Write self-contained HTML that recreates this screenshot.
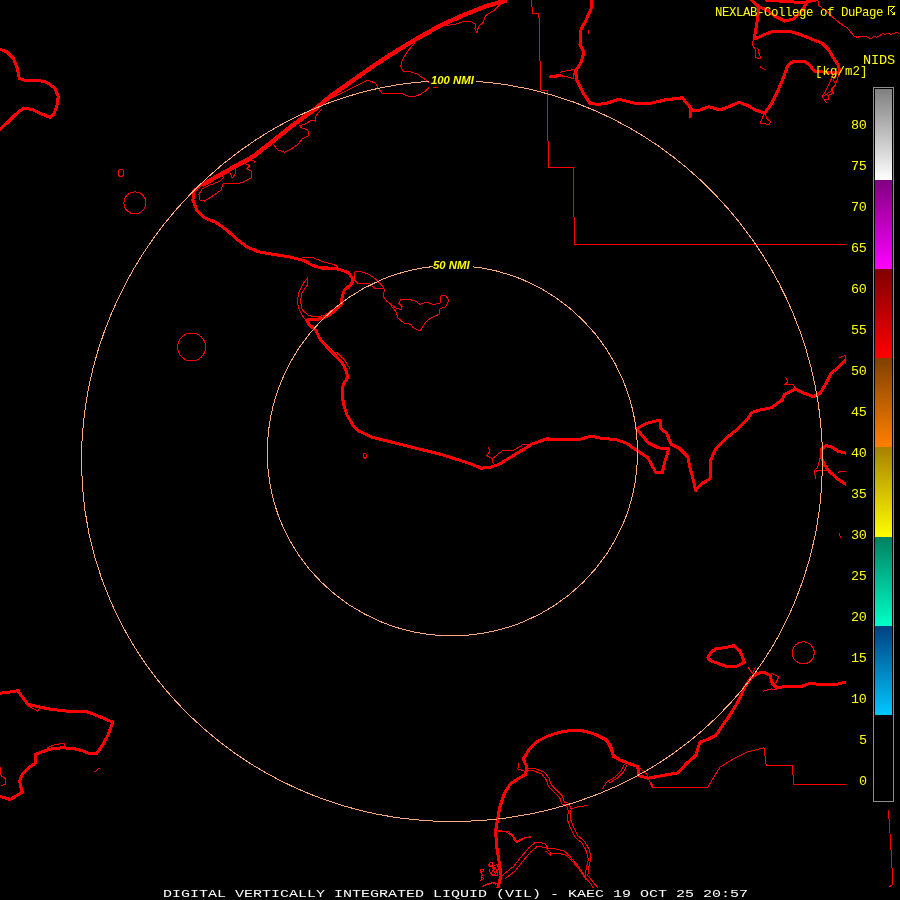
<!DOCTYPE html>
<html><head><meta charset="utf-8"><title>DIGITAL VERTICALLY INTEGRATED LIQUID (VIL) - KAEC</title>
<style>
html,body{margin:0;padding:0;background:#000;}
body{width:900px;height:900px;position:relative;overflow:hidden;font-family:"Liberation Mono",monospace;}
.t{position:absolute;white-space:pre;line-height:1;will-change:transform;}
.y{color:#ffff00;}
.n{position:absolute;right:33.5px;color:#ffff00;font-size:13.4px;line-height:1;letter-spacing:-0.3px;white-space:pre;height:9px;will-change:transform;}
.n{margin-top:-0.6px}
.r{position:absolute;color:#ffff00;font:italic bold 11.35px "Liberation Sans",sans-serif;line-height:1;white-space:pre;will-change:transform;}
</style></head><body>
<svg width="900" height="900" viewBox="0 0 900 900" style="position:absolute;left:0;top:0" shape-rendering="crispEdges">
<g fill="none" stroke="#ff0000" stroke-width="1" stroke-linejoin="round" stroke-linecap="butt">
<path d="M531.8,0.0 L532.2,13.3 L538.9,13.3 L540.7,90.0 L547.3,90.7 L548.4,167.1 L573.3,167.1 L574.4,244.4"/>
<path d="M574.4,244.4 L846,244.4"/>
<path d="M640.0,767.8 L646.7,774.4 L650.0,782.2 L652.2,787.1 L707.8,787.1 L720.0,767.1 L733.3,758.9 L746.7,752.2 L764.0,747.8 L766.2,765.6 L792.2,765.6 L793.8,784.4 L846.7,784.4"/>
<path d="M888.4,810.0 L890.0,833.3 L891.6,860.0 L892.9,884.4 L888.9,887.3"/>
<path d="M817.8,0.0 L818.9,5.6 L826.7,11.1 L833.3,17.8 L840.0,23.3 L840.0,23.0 L844.0,26.0 L846.7,27.3 L850.0,31.3 L854.0,36.0 L857.3,37.3 L861.3,36.3 L865.3,36.3 L869.3,38.3 L872.0,38.0 L874.0,36.3 L876.7,37.3 L880.0,35.3 L882.7,33.7 L885.3,34.3 L888.0,33.3 L891.3,34.3 L894.0,33.3 L896.7,32.3 L899.0,33.7"/>
<path d="M213.3,177.8 L222.2,174.4 L223.3,177.8 L220.0,181.1 L208.9,185.6 L202.2,188.9 L198.9,194.4 L200.0,200.0 L204.4,201.1 L213.3,195.6 L221.1,190.0 L223.3,183.3 L233.3,184.0 L242.2,182.7 L251.1,177.8 L251.6,171.1 L246.7,168.9 L250.0,165.6 L244.4,163.3 L246.7,160.4 L255.6,161.1 L254.4,163.3"/>
<path d="M230.0,173.3 L232.2,177.8 L235.6,173.3 L235.6,167.8"/>
<path d="M273.3,144.4 L277.8,150.0 L284.4,152.2 L291.1,148.9 L297.8,144.4 L302.2,138.9 L308.9,135.6 L307.8,130.0 L301.1,127.8 L300.0,125.6 L306.7,123.3 L311.1,120.0 L315.6,121.1 L315.6,116.7 L317.8,113.3 L322.2,108.9"/>
<path d="M414.4,43.3 L407.8,51.1 L402.2,60.0 L400.7,66.7 L403.3,71.6 L410.0,71.6 L417.8,74.4 L424.4,78.9 L428.9,82.2"/>
<path d="M428.9,87.8 L425.6,91.1 L420.0,94.4 L415.6,96.2 L407.8,96.0 L401.1,93.3 L392.2,93.8 L382.2,93.3 L377.8,87.8 L375.6,83.3 L367.8,80.0 L358.9,84.4 L343.3,92.2 L330.0,98.9"/>
<path d="M445.6,25.6 L454.4,24.4 L463.3,21.6 L471.1,21.6 L475.6,24.4 L474.9,28.9 L477.1,32.9 L478.4,26.7 L483.3,22.2 L485.6,15.6 L494.4,10.0 L501.1,3.3 L505.6,0.0"/>
<path d="M432.7,87.3 L437.8,87.3"/>
<path d="M560.0,72.2 L574.4,69.3 L573.3,78.9 L566.7,76.7 L560.0,75.6"/>
<path d="M753.3,40.0 L752.2,44.4 L755.6,50.0 L755.6,57.8 L761.1,58.9 L758.9,53.3 L757.8,47.8"/>
<path d="M760.0,66.7 L765.6,70.0"/>
<path d="M833.3,73.3 L830.0,82.2 L825.6,91.1 L822.2,96.7 L826.7,103.3"/>
<path d="M838.9,74.4 L835.6,84.4 L831.1,91.1 L824.4,95.6"/>
<path d="M764.4,113.3 L760.0,123.3 L768.9,124.4 L771.1,121.8 L766.7,118.9 L765.6,114.4"/>
<path d="M838.9,357.8 L845.6,355.6 L845.6,364.4"/>
<path d="M785.6,376.7 L787.8,382.2 L784.4,384.4 L793.3,384.4 L795.6,388.9"/>
<path d="M820.0,457.8 L817.8,466.7 L814.4,471.1 L815.6,478.9"/>
<path d="M815.6,471.1 L826.7,470.0"/>
<path d="M837.8,472.2 L845.6,471.1"/>
<path d="M839.6,533.3 L840.4,537.8"/>
<path d="M302.2,257.8 L313.3,257.8 L324.4,262.2 L333.3,264.4 L337.8,266.7"/>
<path d="M308.9,263.3 L320.0,266.7 L327.8,266.7"/>
<path d="M305.6,320.0 L302.2,315.6 L298.9,308.9 L297.3,301.1 L298.9,292.2 L303.3,283.3 L307.8,277.8 L307.8,284.4 L302.2,292.2 L300.4,301.1 L302.2,310.0 L308.9,315.6 L315.6,316.7 L324.4,315.6 L333.3,308.9"/>
<path d="M354.4,280.0 L354.4,272.2 L358.9,271.1 L368.9,274.4 L375.6,278.9 L382.2,285.6 L384.4,290.0 L383.3,296.7 L386.7,301.1 L391.1,304.4 L395.6,307.8 L401.1,310.0 L402.2,306.7 L398.9,303.3 L401.1,299.3 L408.9,299.3 L415.6,301.1 L420.0,304.4 L426.7,302.2 L433.3,304.4 L440.0,303.3 L441.1,295.6 L445.6,295.6 L448.9,300.0 L445.6,306.7 L440.0,308.9 L438.9,314.4 L431.1,317.8 L425.6,322.2 L420.0,331.1 L413.3,327.8 L411.1,324.4 L404.4,323.3 L397.8,317.8 L395.6,311.1 L391.1,305.6"/>
<path d="M354.4,280.0 L357.8,283.3 L368.9,283.3 L375.6,288.9 L383.3,288.9"/>
<path d="M336.7,352.2 L344.4,360.0 L350.0,368.9"/>
<path d="M487.8,446.7 L490.0,451.1 L486.7,455.6 L492.2,458.9 L503.3,450.0 L514.4,450.0 L523.3,444.4 L528.9,444.4"/>
<path d="M527.8,768.9 L535.6,768.9 L544.4,772.2 L548.9,777.8 L551.1,784.4 L557.8,791.1 L562.2,795.6 L564.4,802.2 L568.9,803.3 L571.1,808.9 L570.0,817.8 L573.3,826.7 L577.8,835.6 L584.4,841.1 L588.9,848.9 L591.1,857.8 L588.9,866.7 L587.8,875.6 L593.3,882.2 L597.8,887.8"/>
<path d="M525.1,770.7 L532.9,770.7 L541.8,774.0 L546.2,779.6 L548.4,786.2 L555.1,792.9 L559.6,797.3 L561.8,804.0 L566.2,805.1 L568.4,810.7 L567.3,819.6 L570.7,828.4 L575.1,837.3 L581.8,842.9 L586.2,850.7 L588.4,859.6 L586.2,868.4 L585.1,877.3 L590.7,884.0"/>
<path d="M571.1,808.9 L577.8,806.7 L587.8,805.6"/>
<path d="M503.3,874.4 L513.3,866.7 L522.2,855.6 L528.9,847.8 L535.6,842.2 L544.4,843.3 L548.9,848.9 L555.6,848.9 L564.4,851.1 L571.1,857.8 L577.8,865.6 L584.4,875.6 L591.1,884.4 L593.3,887.8"/>
<path d="M505.1,878.7 L515.1,870.9 L524.0,859.8 L530.7,852.0 L537.3,846.4 L546.2,847.6 L550.7,853.1 L557.3,853.1 L566.2,855.3 L572.9,862.0 L579.6,869.8 L586.2,879.8"/>
<path d="M545.6,851.1 L551.1,855.6"/>
<path d="M497.8,831.1 L507.8,831.1 L513.3,835.6 L516.7,841.1 L524.4,837.8 L531.1,836.7"/>
<path d="M624.4,764.4 L621.1,771.1 L615.6,776.7 L606.7,782.2 L602.2,788.9"/>
<path d="M626.7,765.6 L623.3,772.2 L617.8,777.8 L608.9,783.3"/>
<path d="M518.9,763.3 L517.8,768.9 L524.4,771.1"/>
<path d="M480.0,868.9 L482.2,874.4 L481.1,880.0"/>
<path d="M488.9,863.3 L493.3,868.9 L491.1,874.4 L497.8,875.6 L495.6,867.8 L490.0,865.6"/>
<path d="M482.2,886.7 L493.3,882.2 L498.9,884.4"/>
<path d="M651.1,782.2 L653.3,787.8 L660.0,787.8"/>
<path d="M763.3,691.1 L771.1,688.9 L776.7,690.0"/>
<path d="M747.8,666.7 L752.2,673.3 L755.6,666.7"/>
<path d="M771.1,673.3 L778.9,676.7 L775.6,683.3"/>
<path d="M0.0,766.7 L1.1,775.6 L5.6,778.9 L5.6,784.4 L1.1,785.6"/>
<path d="M46.7,747.8 L55.6,744.4 L64.4,743.3 L64.4,746.7"/>
<path d="M94.4,772.2 L99.6,767.8"/>
<path d="M27.8,705.6 L37.8,711.1 L40.0,707.8"/>
<path d="M588,30 L588.5,34"/>
<path d="M492.2,458.9 L493.3,464.4"/>
<path d="M498.3,830.6 L504.4,831.3 L508.9,833.6 L512.2,835.6 L514.2,840.0 L516.7,842.4 L520.6,840.6 L525.0,837.8 L531.1,837.2"/>
<path d="M489.4,863.3 L492.2,862.2 L492.8,865.0 L490.0,866.7 L488.3,865.0 L489.4,863.3"/>
<path d="M493.3,866.7 L496.7,864.4 L498.3,867.8 L497.8,872.2 L495.0,873.3 L493.3,870.0 L495.6,868.3"/>
<path d="M488.9,868.9 L490.6,873.3 L493.3,875.6 L496.7,875.0"/>
<path d="M481.1,869.4 L483.9,870.0 L480.6,872.8 L483.3,875.0 L481.1,877.2 L483.9,878.3 L480.0,880.6"/>
<path d="M483.3,885.6 L487.8,883.9 L493.3,882.8 L495.6,884.4"/>
<path d="M836.0,74.4 L833.3,80.0 L836.0,84.4 L831.6,88.9 L833.3,93.3 L827.8,95.6 L828.9,100.0 L823.3,98.9"/>
<circle cx="134.9" cy="202.9" r="11"/>
<circle cx="191.6" cy="347" r="14"/>
<circle cx="803.3" cy="652.9" r="11"/>
<ellipse cx="121" cy="172.9" rx="2.7" ry="3.8"/>
<ellipse cx="364.9" cy="455.6" rx="1.5" ry="2.6"/>
</g>
<defs><g id="tk">
<path d="M0.0,49.3 L6.7,51.7 L13.3,58.3 L17.3,68.3 L19.3,78.3 L26.7,81.0 L36.7,80.0 L46.7,82.3 L55.0,88.3 L58.3,96.7 L56.7,106.7 L53.3,115.0 L50.0,117.3 L40.0,113.3 L31.7,109.3 L23.3,108.3 L15.0,115.0 L6.7,123.3 L0.0,129.3"/>
<path d="M505.6,0.0 L485.6,5.6 L463.3,14.4 L441.1,24.4 L418.9,36.7 L396.7,50.0 L374.4,64.4 L352.2,80.0 L330.0,95.6 L315.6,107.8 L291.1,125.6 L273.3,140.0 L253.3,155.6 L231.1,167.8 L213.3,177.8 L200.0,185.6 L193.8,191.1 L192.9,200.0 L196.7,210.0 L204.4,217.8 L215.6,222.2 L226.7,230.0 L237.8,240.0 L246.7,246.7 L257.8,251.6 L273.3,254.4 L288.9,256.7 L302.2,260.0 L313.3,265.6 L324.4,268.9 L335.6,268.4 L344.4,271.1 L348.9,273.3 L353.3,280.0 L351.1,284.4 L344.4,290.0 L342.2,296.7 L341.1,304.4 L333.3,312.2 L324.4,317.8 L315.6,319.6 L306.7,320.0 L308.9,324.4 L315.6,330.0 L320.0,338.9 L326.7,346.7 L335.6,355.6 L343.3,364.4 L346.7,372.2 L347.8,377.8 L343.3,384.4 L342.2,392.2 L343.3,403.3 L346.7,414.4 L353.3,425.6 L358.9,431.1 L372.2,437.3 L387.8,441.1 L405.6,445.6 L423.3,450.0 L441.1,454.4 L458.9,460.0 L472.2,464.4 L481.1,468.2 L490.0,467.3 L498.9,464.4 L507.8,458.9 L518.9,452.2 L530.0,445.6 L531.1,444.4 L546.7,438.9 L564.4,440.0 L580.0,439.3 L591.1,436.2 L602.2,438.4 L615.6,439.6 L626.7,443.3 L637.8,451.1 L647.8,457.8 L653.3,467.8 L656.0,472.9 L662.2,472.9 L664.4,463.3 L667.8,452.2 L668.4,448.9 L657.8,447.8 L648.9,443.3 L642.2,435.6 L636.7,428.9 L646.7,423.3 L660.0,420.0 L660.0,427.8 L666.7,433.3 L669.3,440.0 L671.1,444.4 L680.0,448.9 L687.8,456.7 L690.0,467.8 L693.3,480.0 L695.6,490.4 L702.2,483.3 L710.0,478.9 L710.7,460.0 L715.6,448.9 L720.0,444.4 L717.8,446.7 L726.7,437.8 L737.8,428.9 L746.7,420.0 L752.2,412.2 L760.0,410.0 L771.1,407.8 L782.2,400.0 L784.4,394.4 L795.6,388.9 L804.4,393.3 L813.3,396.7 L820.0,393.3 L826.7,382.2 L831.1,373.3 L837.8,367.8 L845.6,360.4"/>
<path d="M591.1,0.0 L591.1,8.9 L585.6,21.1 L581.1,28.9 L580.0,44.4 L584.0,52.2 L581.1,62.2 L575.6,71.1 L576.7,80.0 L583.3,93.3 L590.0,103.3 L597.8,104.4 L606.7,103.3 L618.9,99.3 L626.7,101.1 L637.8,104.0 L651.1,103.3 L664.4,100.0 L682.2,97.8 L688.9,105.6 L692.2,110.0 L700.0,110.0 L708.9,106.7 L720.0,110.0 L728.9,106.7 L738.9,102.2 L747.8,105.6 L755.6,110.0 L764.4,113.3 L771.1,104.4 L777.8,91.1 L783.3,77.8 L787.8,65.6 L793.3,61.1 L804.4,61.1 L808.9,64.4 L814.4,71.1 L824.4,72.2 L837.8,72.2 L840.0,71.1 L837.8,64.4 L833.3,57.8 L828.9,50.0 L822.2,43.3 L811.1,38.9 L800.0,34.4 L788.9,31.1 L773.3,31.1 L762.2,35.6 L754.4,38.9 L755.1,33.3 L756.7,24.4 L758.2,13.3 L758.9,6.7 L751.1,0.0"/>
<path d="M758.9,6.7 L766.7,10.0 L775.6,16.7 L784.4,21.1 L793.3,18.9 L800.0,13.3 L804.4,6.7 L806.7,1.8 L815.6,0.0"/>
<path d="M766.7,0.4 L784.4,1.3 L804.4,2.7"/>
<path d="M550.7,76.7 L560.0,75.6"/>
<path d="M690.0,110.0 L690.0,116.7"/>
<path d="M846.0,453.3 L837.8,451.1 L831.1,446.7 L825.6,445.6 L821.1,450.0 L821.1,456.7 L824.4,464.4 L830.0,472.2 L837.8,478.9 L846.0,484.4"/>
<path d="M497.8,887.8 L501.1,875.6 L498.9,860.0 L496.7,846.7 L495.6,831.1 L497.8,817.8 L500.0,806.7 L504.4,793.3 L510.0,784.4 L517.8,778.9 L525.6,774.4 L526.7,766.7 L523.3,758.9 L528.9,750.0 L537.8,741.1 L548.9,735.6 L560.0,732.2 L573.3,730.0 L584.4,731.1 L595.6,734.4 L604.4,738.9 L610.0,744.4 L612.2,751.1 L613.3,756.7 L620.0,760.0 L628.9,763.3 L637.8,766.7 L638.9,775.6 L647.8,778.2 L662.2,775.6 L677.8,772.9 L686.7,763.3 L695.6,755.6 L700.0,742.2 L708.9,738.9 L715.6,735.6 L723.3,724.4 L731.1,713.3 L738.9,700.0 L744.4,687.8 L751.1,677.8 L757.8,673.3 L764.4,672.2 L770.0,675.6 L772.2,683.3 L776.7,687.8 L784.4,686.7 L793.3,686.2 L802.2,686.2 L810.0,683.3 L820.0,684.4 L831.1,684.0 L837.8,684.0 L846.0,682.2"/>
<path d="M620.0,760.0 L613.3,755.6 L611.1,748.9 L606.7,740.0 L600.0,736.7"/>
<path d="M707.8,657.8 L711.1,652.2 L716.7,648.4 L724.4,647.8 L734.4,645.6 L740.0,651.1 L744.4,662.2 L736.7,666.2 L726.7,666.7 L717.8,663.3 L711.1,661.1 L707.8,657.8"/>
<path d="M0.0,693.3 L8.9,692.2 L17.8,690.7 L22.2,696.7 L27.8,704.4 L37.8,706.7 L51.1,709.3 L66.7,711.1 L86.7,711.6 L100.0,716.7 L112.9,722.2 L107.8,735.6 L102.2,745.6 L96.7,753.3 L90.0,753.8 L82.2,750.7 L73.3,748.4 L62.2,747.8 L51.1,748.9 L41.1,752.2 L35.6,754.4 L35.1,763.3 L28.9,767.8 L22.2,774.4 L19.6,781.1 L21.1,787.8 L22.2,792.2 L16.7,795.6 L10.0,799.6 L3.3,797.3 L0.0,796.7"/>
</g></defs>
<path d="M505.6,0.0 L485.6,5.6 L463.3,14.4 L441.1,24.4 L418.9,36.7 L396.7,50.0 L374.4,64.4 L352.2,80.0 L330.0,95.6 L315.6,107.8 L291.1,125.6 L273.3,140.0 L253.3,155.6 L231.1,167.8 L213.3,177.8 L202.2,184.4" fill="none" stroke="#ff0000" stroke-width="2" transform="translate(1,1.6)"/>
<g fill="none" stroke="#ff0000" stroke-linejoin="round" stroke-linecap="round">
<use href="#tk" stroke-width="3"/>
</g>
<g fill="none" stroke="#fcaa7c" stroke-width="1">
<path d="M451.5,80.6 C654.8,80.6 822.5,252.5 822.5,461 C822.5,665.4 662.1,821.5 452,821.5 C247.4,821.5 81.5,660.1 81.5,461 C81.5,254.4 250.6,80.6 451.5,80.6Z"/>
<path d="M452,265.6 C554.5,265.6 637.5,349.5 637.5,453 C637.5,554.0 554.5,635.8 452,635.8 C350.0,635.8 267.3,554.0 267.3,453 C267.3,349.5 350.0,265.6 452,265.6Z"/>
</g>
<rect x="429" y="78" width="47" height="6" fill="#000"/>
<rect x="432.5" y="263" width="40.5" height="6" fill="#000"/>
<rect x="846" y="40" width="54" height="766" fill="#000"/>
<rect x="0" y="888" width="900" height="12" fill="#000"/>
<defs>
<linearGradient id="g0" x1="0" y1="0" x2="0" y2="1"><stop offset="0" stop-color="#808080"/><stop offset="1" stop-color="#ffffff"/></linearGradient>
<linearGradient id="g1" x1="0" y1="0" x2="0" y2="1"><stop offset="0" stop-color="#800080"/><stop offset="1" stop-color="#ff00ff"/></linearGradient>
<linearGradient id="g2" x1="0" y1="0" x2="0" y2="1"><stop offset="0" stop-color="#800000"/><stop offset="1" stop-color="#ff0000"/></linearGradient>
<linearGradient id="g3" x1="0" y1="0" x2="0" y2="1"><stop offset="0" stop-color="#804000"/><stop offset="1" stop-color="#ff8000"/></linearGradient>
<linearGradient id="g4" x1="0" y1="0" x2="0" y2="1"><stop offset="0" stop-color="#a88000"/><stop offset="1" stop-color="#ffff00"/></linearGradient>
<linearGradient id="g5" x1="0" y1="0" x2="0" y2="1"><stop offset="0" stop-color="#008060"/><stop offset="1" stop-color="#00ffc8"/></linearGradient>
<linearGradient id="g6" x1="0" y1="0" x2="0" y2="1"><stop offset="0" stop-color="#004080"/><stop offset="1" stop-color="#00c8ff"/></linearGradient>
</defs>
<rect x="873.5" y="87.5" width="20" height="714" fill="none" stroke="#8c8c8c" stroke-width="1"/>
<rect x="875" y="89" width="17" height="91" fill="url(#g0)"/>
<rect x="875" y="180" width="17" height="89" fill="url(#g1)"/>
<rect x="875" y="269" width="17" height="89" fill="url(#g2)"/>
<rect x="875" y="358" width="17" height="89" fill="url(#g3)"/>
<rect x="875" y="447" width="17" height="90" fill="url(#g4)"/>
<rect x="875" y="537" width="17" height="89" fill="url(#g5)"/>
<rect x="875" y="626" width="17" height="89" fill="url(#g6)"/>
<path d="M888.5,6 V15 M888,6.5 H895 M894.5,6.5 L890.5,10.5 L894.5,14.5" fill="none" stroke="#ffff00" stroke-width="1"/>
<path d="M894,12h1v1h-1z M893,13h2v1h-2z M892,14h3v1h-3z" fill="#ffff00"/>
</svg>
<div class="r" style="left:431px;top:74.8px">100 NMI</div>
<div class="r" style="left:433.4px;top:259.8px">50 NMI</div>
<div class="t y" style="left:715px;top:6.5px;font-size:12.4px;letter-spacing:-0.44px">NEXLAB-College of DuPage</div>
<div class="t y" style="left:863px;top:54px;font-size:13.6px;letter-spacing:-0.16px">NIDS</div>
<div class="t y" style="left:815px;top:65.5px;font-size:12.4px;letter-spacing:0.05px">[kg/m2]</div>
<div class="n" style="top:120px">80</div>
<div class="n" style="top:161px">75</div>
<div class="n" style="top:202px">70</div>
<div class="n" style="top:243px">65</div>
<div class="n" style="top:284px">60</div>
<div class="n" style="top:325px">55</div>
<div class="n" style="top:366px">50</div>
<div class="n" style="top:407px">45</div>
<div class="n" style="top:448px">40</div>
<div class="n" style="top:489px">35</div>
<div class="n" style="top:530px">30</div>
<div class="n" style="top:571px">25</div>
<div class="n" style="top:612px">20</div>
<div class="n" style="top:653px">15</div>
<div class="n" style="top:694px">10</div>
<div class="n" style="top:735px">5</div>
<div class="n" style="top:776px">0</div>
<div class="t" id="title" style="left:162.5px;top:888.6px;font-size:11.8px;color:#ffffff;transform-origin:0 0;transform:scaleX(1.2712)">DIGITAL VERTICALLY INTEGRATED LIQUID (VIL) - KAEC 19 OCT 25 20:57</div>
</body></html>
